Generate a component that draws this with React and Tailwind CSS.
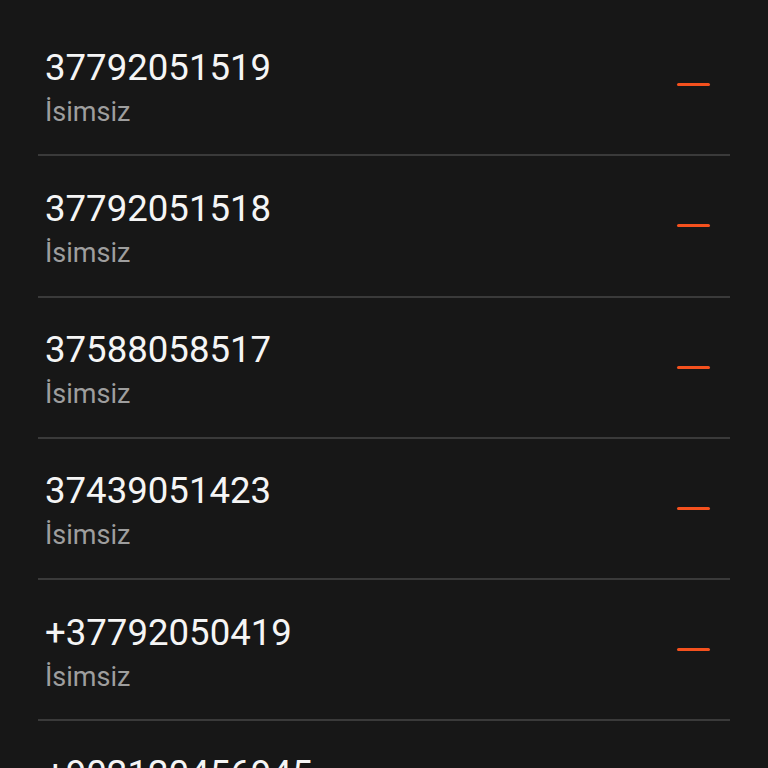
const calls = [
  { number: '37792051519', name: 'İsimsiz' },
  { number: '37792051518', name: 'İsimsiz' },
  { number: '37588058517', name: 'İsimsiz' },
  { number: '37439051423', name: 'İsimsiz' },
  { number: '+37792050419', name: 'İsimsiz' },
  { number: '+902120456945', name: 'İsimsiz' },
]

export default function App() {
  return (
    <div className="h-[768px] overflow-hidden bg-[#171717] pt-[15px] font-['Roboto',sans-serif]">
      {calls.map((c, i) => (
        <div key={i} className="mx-[38px]">
          {/* Row */}
          <div className="flex items-center justify-between pl-[7px] pr-[20px]">
            <div className="pt-[31.5px] pb-[26.75px]">
              <div className="text-[36.6px] leading-[42px] text-[#f5f5f5]">{c.number}</div>
              <div className="mt-[7px] text-[27px] leading-[32px] text-[#9e9e9e]">{c.name}</div>
            </div>
            <div className="w-[33px] h-[3px] rounded-full bg-[#f4511e]" />
          </div>
          {/* Divider */}
          <div className="h-[2px] bg-[#3a3a3a]" />
        </div>
      ))}
    </div>
  )
}
